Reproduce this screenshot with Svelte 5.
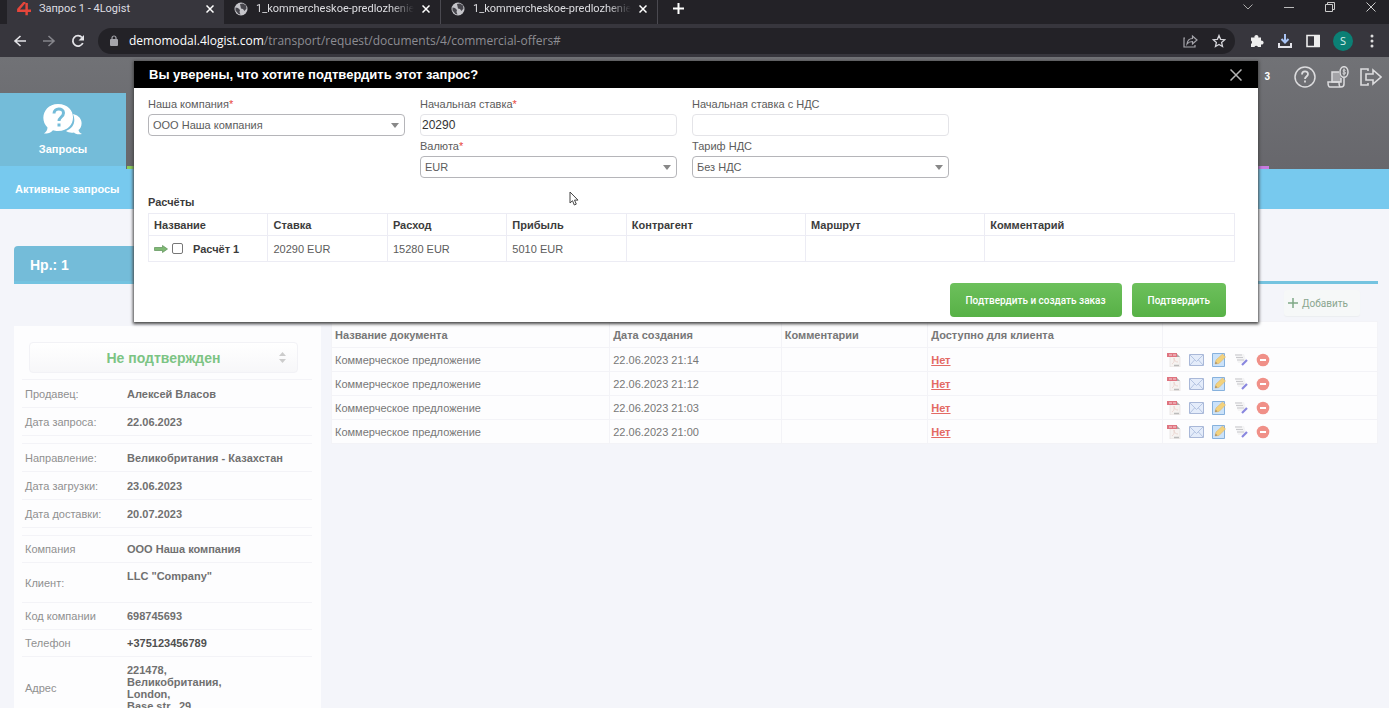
<script>
    const browserTabs = [
        { title: "Запрос 1 - 4Logist", active: true },
        { title: "1_kommercheskoe-predlozhenie", active: false },
        { title: "1_kommercheskoe-predlozhenie", active: false }
    ];

    const sections = [
        "#77c9ee", "#8bd05a", "#e8b84f", "#e0715c", "#6fa8dc",
        "#5cc0a8", "#d9a05b", "#7f8fd9", "#a9c45a", "#c77be0"
    ];

    const documents = [
        { name: "Коммерческое предложение", created: "22.06.2023 21:14" },
        { name: "Коммерческое предложение", created: "22.06.2023 21:12" },
        { name: "Коммерческое предложение", created: "22.06.2023 21:03" },
        { name: "Коммерческое предложение", created: "22.06.2023 21:00" }
    ];

    const details = [
        [
            { label: "Продавец:", value: "Алексей Власов" },
            { label: "Дата запроса:", value: "22.06.2023" }
        ],
        [
            { label: "Направление:", value: "Великобритания - Казахстан" },
            { label: "Дата загрузки:", value: "23.06.2023" },
            { label: "Дата доставки:", value: "20.07.2023" }
        ],
        [
            { label: "Компания", value: "ООО Наша компания" },
            { label: "Клиент:", value: 'LLC "Company"', tall: true },
            { label: "Код компании", value: "698745693" },
            { label: "Телефон", value: "+375123456789", dark: true },
            { label: "Адрес", value: "221478,\nВеликобритания,\nLondon,\nBase str., 29" }
        ]
    ];

    const calculations = [
        { name: "Расчёт 1", rate: "20290 EUR", cost: "15280 EUR", profit: "5010 EUR" }
    ];

    let modalOpen = true;
    let rate = "20290";
    let rateVat = "";
    let url = "/transport/request/documents/4/commercial-offers#";
</script>

<div class="window">
    <div class="tabstrip">
        {#each browserTabs as tab}
            <div class="tab" class:active={tab.active}>
                {#if tab.active}
                    <svg class="favicon" viewBox="0 0 16 16">
                        <path d="M9 0 1.500 8.500V10H9M11 1v14M8 10h8" fill="none" stroke="#e5463b" stroke-width="2.800" />
                    </svg>
                {:else}
                    <svg class="favicon" viewBox="0 0 14 14">
                        <circle cx="7" cy="7" r="6.500" fill="#c5c5ca" />
                        <path d="M1.500 5.500 4 6l2 2-.5 2 1 2.500-2-.5-3-3.500zM6 2l3-.5 3 2 .5 3-2 2.500-1.500-2-2-.5z" fill="#47464d" />
                    </svg>
                {/if}
                <span class="tab-title">{tab.title}</span>
                <button class="plain" aria-label="Закрыть вкладку">
                    <svg width="8" height="8" viewBox="0 0 8 8"><path d="m.5.5 7 7m0-7-7 7" stroke="#fff" stroke-width="1.500" /></svg>
                </button>
            </div>
        {/each}
        <button class="plain new-tab" aria-label="Новая вкладка">
            <svg width="11" height="11" viewBox="0 0 11 11"><path d="M5.500 0v11M0 5.500h11" stroke="#fff" stroke-width="2" /></svg>
        </button>
        <div class="window-buttons">
            <button class="plain" aria-label="Поиск вкладок">
                <svg width="12" height="12" viewBox="0 0 12 12"><path d="m1.500 3.500 4.500 4.500 4.500-4.500" fill="none" stroke="#aaa" /></svg>
            </button>
            <button class="plain" aria-label="Свернуть">
                <svg width="12" height="12" viewBox="0 0 12 12"><path d="M1 6.500h10" stroke="#bbb" /></svg>
            </button>
            <button class="plain" aria-label="Развернуть">
                <svg width="12" height="12" viewBox="0 0 12 12"><path d="M1.500 3.500h7v7h-7zM3.500 3V1.500h7v7H9" fill="none" stroke="#ccc" /></svg>
            </button>
            <button class="plain" aria-label="Закрыть">
                <svg width="12" height="12" viewBox="0 0 12 12"><path d="m1.500 1.500 9 9m0-9-9 9" stroke="#ccc" /></svg>
            </button>
        </div>
    </div>

    <div class="toolbar">
        <button class="plain" aria-label="Назад">
            <svg width="14" height="14" viewBox="0 0 14 14"><path d="M13 7H2m5.500-5L2 7l5.500 5" fill="none" stroke="#e4e4e8" stroke-width="1.600" /></svg>
        </button>
        <button class="plain" aria-label="Вперёд">
            <svg width="14" height="14" viewBox="0 0 14 14"><path d="M1 7h11M6.500 2 12 7l-5.500 5" fill="none" stroke="#85858b" stroke-width="1.600" /></svg>
        </button>
        <button class="plain" aria-label="Обновить">
            <svg width="14" height="14" viewBox="0 0 14 14">
                <path d="M11.800 9A5.200 5.200 0 1 1 11 3.500" fill="none" stroke="#e4e4e8" stroke-width="1.800" />
                <path d="M13 1v5.500H7.500z" fill="#e4e4e8" />
            </svg>
        </button>
        <div class="address">
            <svg width="8" height="11" viewBox="0 0 8 11">
                <path d="M2 5V3a2 2 0 0 1 4 0v2" fill="none" stroke="#a5a5ab" stroke-width="1.200" />
                <rect y="4" width="8" height="7" rx="1" fill="#a5a5ab" />
            </svg>
            <span class="url"><b>demomodal.4logist.com</b>{url}</span>
            <button class="plain" aria-label="Поделиться">
                <svg width="15" height="14" viewBox="0 0 15 14">
                    <path d="M2 4H1v9h11v-2M4 10c.5-4 2.500-5.500 5.500-5.500V2L14 6l-4.500 4V7.500C7 7.500 5.500 8 4 10z" fill="none" stroke="#a5a5ab" stroke-width="1.200" />
                </svg>
            </button>
            <button class="plain" aria-label="Добавить в закладки">
                <svg width="14" height="14" viewBox="0 0 14 14">
                    <path d="m7 1.500 1.600 3.800 4.100.4-3.100 2.700.9 4.100L7 10.400l-3.500 2.100.9-4.100-3.100-2.700 4.100-.4z" fill="none" stroke="#d5d5da" stroke-width="1.300" />
                </svg>
            </button>
        </div>
        <div class="tools">
            <button class="plain" aria-label="Расширения">
                <svg width="14" height="14" viewBox="0 0 14 14">
                    <path d="M1 3.500h3.500a2 2 0 1 1 3.800 0H11v3.200a2 2 0 1 1 0 3.800V13H8a2 2 0 0 0-3.600 0H1v-3a2 2 0 0 0 0-3.500z" fill="#eee" />
                </svg>
            </button>
            <button class="plain" aria-label="Загрузки">
                <svg width="16" height="16" viewBox="0 0 16 16">
                    <path d="M8 1v8M4.500 6 8 9.500 11.500 6" fill="none" stroke="#a9c4f5" stroke-width="2" />
                    <path d="M2 10v4h12v-4" fill="none" stroke="#e4e4ea" stroke-width="2" />
                </svg>
            </button>
            <button class="plain" aria-label="Боковая панель">
                <svg width="14" height="14" viewBox="0 0 14 14">
                    <path d="M1 1.500h12v11H1z" fill="none" stroke="#eee" stroke-width="1.600" />
                    <path d="M8 1h6v12H8z" fill="#eee" />
                </svg>
            </button>
            <button class="plain avatar">S</button>
            <button class="plain menu" aria-label="Меню">
                <svg width="4" height="14" viewBox="0 0 4 14" fill="#ddd">
                    <circle cx="2" cy="2" r="1.500" /><circle cx="2" cy="7" r="1.500" /><circle cx="2" cy="12" r="1.500" />
                </svg>
            </button>
        </div>
    </div>

    <div class="page">
        <header>
            <div class="user-bar">
                <span class="count">3</span>
                <button class="plain" aria-label="Помощь">
                    <svg width="22" height="22" viewBox="0 0 22 22" fill="none" stroke="#dcdcde" stroke-width="1.500">
                        <circle cx="11" cy="11" r="10" />
                        <path d="M8 8.500c0-4 6-4 6-.5 0 2.500-3 2.500-3 5M11 14.500v2" stroke-width="1.800" />
                    </svg>
                </button>
                <button class="plain" aria-label="Счета">
                    <svg width="22" height="22" viewBox="0 0 22 22" fill="none" stroke="#dcdcde" stroke-width="1.500">
                        <path d="M12 6H5v10h9V12" fill="#a3a3a7" />
                        <path d="M17 12v6a3 3 0 0 1-3 3H3c-2 0-2-5-2-5h11c0 2 .5 5 2 5" />
                        <ellipse cx="17" cy="6" rx="4" ry="5.300" fill="#6d6e72" />
                        <path d="M18.500 4.500c-1-1-3-.5-2.500.7s3 .8 2.500 2-2 1-3 0M17 2.500v7" stroke-width="1" />
                    </svg>
                </button>
                <button class="plain" aria-label="Выход">
                    <svg width="22" height="20" viewBox="0 0 22 20" fill="none" stroke="#dcdcde" stroke-width="1.600">
                        <path d="M8 4V2H1v16h7v-2M6 7h7V3l8 7-8 7v-4H6z" />
                    </svg>
                </button>
            </div>
            <nav class="sections">
                {#each sections as color, i}
                    <a href="#section{i}" class="section" class:current={i === 0} style:border-bottom-color={color} aria-label={i === 0 ? "Запросы" : `Раздел ${i + 1}`}>
                        {#if i === 0}
                            <svg width="40" height="32" viewBox="0 0 40 32">
                                <path d="M30 10c12 3 9 14 5.500 16 .5 2 1.500 3 3.500 4-4 .8-7-.2-8-1.500-3 .5-6 0-8-1.500 8-3 10-10 7-17z" fill="#fff" />
                                <path d="M15 0c20 0 20 27 0 27-2 0-4-.3-5-.8C7.500 29 5 29.500 1 29.500c2-1.500 3.500-3.500 3.500-6C-4 15.500 1 0 15 0z" fill="#fff" />
                                <path d="M11 9.500c0-6 9.500-6 9.500-.5 0 4-4.500 4-4.500 8M16 19.500v3" fill="none" stroke="#74bcd9" stroke-width="3" />
                            </svg>
                            <span>Запросы</span>
                        {/if}
                    </a>
                {/each}
            </nav>
        </header>
        <nav class="subnav">
            <a href="#active">Активные запросы</a>
        </nav>

        <main>
            <h1><span>Нр.: 1</span></h1>
            <div class="actions">
                <button class="add">
                    <svg width="10" height="10" viewBox="0 0 10 10"><path d="M5 0v10M0 5h10" stroke="#7fa886" stroke-width="1.500" /></svg>
                    Добавить
                </button>
            </div>
            <div class="columns">
                <aside>
                    <button class="status">
                        <span>Не подтвержден</span>
                        <svg width="7" height="11" viewBox="0 0 7 11" fill="#ccc"><path d="M0 4h7L3.500 0zM0 7h7l-3.500 4z" /></svg>
                    </button>
                    {#each details as group}
                        <table class="details">
                            <tbody>
                                {#each group as row}
                                    <tr class:tall={row.tall}>
                                        <th scope="row">{row.label}</th>
                                        <td class:dark={row.dark}>{row.value}</td>
                                    </tr>
                                {/each}
                            </tbody>
                        </table>
                    {/each}
                </aside>

                <table class="documents">
                    <colgroup>
                        <col style:width="26.6%">
                        <col style:width="16.4%">
                        <col style:width="14%">
                        <col style:width="22.4%">
                        <col>
                    </colgroup>
                    <thead>
                        <tr>
                            <th>Название документа</th>
                            <th>Дата создания</th>
                            <th>Комментарии</th>
                            <th>Доступно для клиента</th>
                            <th></th>
                        </tr>
                    </thead>
                    <tbody>
                        {#each documents as doc}
                            <tr>
                                <td>{doc.name}</td>
                                <td>{doc.created}</td>
                                <td></td>
                                <td><a href="#access">Нет</a></td>
                                <td>
                                    <div class="icons">
                                        <button class="plain" aria-label="PDF">
                                            <svg width="14" height="14" viewBox="0 0 14 14">
                                                <path d="M3 1h7l3 3v10H3z" fill="#f6f3f1" stroke="#e2dedc" stroke-width=".6" />
                                                <path d="M10 1v3h3z" fill="#aaa" />
                                                <path d="M0 0h10v4H0z" fill="#df7480" />
                                                <path d="M2 2h3M6 2h3" stroke="#f7d5d8" />
                                                <path d="M5 11c3-2 2-4 2-6 0 3 2 4 4 4" fill="none" stroke="#e9cfc9" stroke-width=".8" />
                                                <path d="M7 12.500h5" stroke="#bbb" stroke-width="1.500" />
                                            </svg>
                                        </button>
                                        <button class="plain" aria-label="Отправить">
                                            <svg width="15" height="12" viewBox="0 0 15 12">
                                                <path d="M.5.5h14v11H.5z" fill="#e4ecfa" stroke="#a9b8d8" />
                                                <path d="m1 11 4.500-5M14 11 9.500 6M1 1l6.500 6.500L14 1" fill="none" stroke="#b4c4e2" />
                                            </svg>
                                        </button>
                                        <button class="plain" aria-label="Изменить">
                                            <svg width="14" height="14" viewBox="0 0 14 14">
                                                <path d="M.5.5h12v13H.5z" fill="#cbe2f9" stroke="#86b1dd" />
                                                <path d="m3 11 1-4L10.500 1 13.500 4 7 10.500z" fill="#f3d27c" stroke="#d9b36a" stroke-width=".5" />
                                                <path d="m3 11 .7-2.500L5.500 10.500z" fill="#a58d6b" />
                                            </svg>
                                        </button>
                                        <button class="plain" aria-label="Подписать">
                                            <svg width="14" height="14" viewBox="0 0 14 14">
                                                <path d="M1 1h9l2 6-4 3H4z" fill="#f4f4f5" />
                                                <path d="M1 2h7M2 4.500h7M3 7h7" stroke="#c9c9cd" />
                                                <path d="m8 12 5-5" stroke="#8886df" stroke-width="2.200" />
                                            </svg>
                                        </button>
                                        <button class="plain" aria-label="Удалить">
                                            <svg width="14" height="14" viewBox="0 0 14 14">
                                                <circle cx="7" cy="7" r="6.300" fill="#f09088" />
                                                <path d="M4 7h6" stroke="#fff" stroke-width="2" />
                                            </svg>
                                        </button>
                                    </div>
                                </td>
                            </tr>
                        {/each}
                    </tbody>
                </table>
            </div>
        </main>
    </div>

    {#if modalOpen}
        <div class="modal" role="dialog" aria-labelledby="modal-title">
            <div class="modal-header">
                <h2 id="modal-title">Вы уверены, что хотите подтвердить этот запрос?</h2>
                <button class="plain" aria-label="Закрыть окно" on:click={() => (modalOpen = false)}>
                    <svg width="12" height="12" viewBox="0 0 12 12"><path d="m.5.5 11 11m0-11-11 11" stroke="#b5b5b5" stroke-width="1.500" /></svg>
                </button>
            </div>
            <div class="modal-body">
                <div class="fields">
                    <div class="field">
                        <label for="company">Наша компания<i>*</i></label>
                        <div class="select"><select id="company"><option>ООО Наша компания</option></select></div>
                    </div>
                    <div class="field">
                        <label for="rate">Начальная ставка<i>*</i></label>
                        <input id="rate" type="text" bind:value={rate}>
                    </div>
                    <div class="field">
                        <label for="rate-vat">Начальная ставка с НДС</label>
                        <input id="rate-vat" type="text" bind:value={rateVat}>
                    </div>
                    <div class="field second">
                        <label for="currency">Валюта<i>*</i></label>
                        <div class="select"><select id="currency"><option>EUR</option></select></div>
                    </div>
                    <div class="field">
                        <label for="vat">Тариф НДС</label>
                        <div class="select"><select id="vat"><option>Без НДС</option></select></div>
                    </div>
                </div>

                <h3>Расчёты</h3>
                <table class="calculations">
                    <colgroup>
                        <col style:width="11%">
                        <col style:width="11%">
                        <col style:width="11%">
                        <col style:width="11%">
                        <col style:width="16.5%">
                        <col style:width="16.5%">
                        <col>
                    </colgroup>
                    <thead>
                        <tr>
                            <th>Название</th>
                            <th>Ставка</th>
                            <th>Расход</th>
                            <th>Прибыль</th>
                            <th>Контрагент</th>
                            <th>Маршрут</th>
                            <th>Комментарий</th>
                        </tr>
                    </thead>
                    <tbody>
                        {#each calculations as calc, i}
                            <tr>
                                <td>
                                    <div class="calc-name">
                                        <svg width="14" height="8" viewBox="0 0 14 8">
                                            <path d="M.5 2.500h8v-2L13.500 4l-5 3.500v-2h-8z" fill="#7fb974" stroke="#5c8f58" stroke-width=".7" />
                                        </svg>
                                        <input type="checkbox" id="calc{i}">
                                        <label for="calc{i}">{calc.name}</label>
                                    </div>
                                </td>
                                <td>{calc.rate}</td>
                                <td>{calc.cost}</td>
                                <td>{calc.profit}</td>
                                <td></td>
                                <td></td>
                                <td></td>
                            </tr>
                        {/each}
                    </tbody>
                </table>

                <div class="modal-buttons">
                    <button>Подтвердить и создать заказ</button>
                    <button>Подтвердить</button>
                </div>
            </div>
        </div>
    {/if}

    <svg class="cursor" width="10" height="15" viewBox="0 0 10 15">
        <path d="M1 1v11l2.500-2.300L5.300 14l2-.9-1.800-4H9z" fill="#fff" stroke="#444" />
    </svg>
</div>

<style>
    :global(body) {
        margin: 0;
    }

    .window {
        position: relative;
        height: 100vh;
        overflow: hidden;
        display: flex;
        flex-direction: column;
        background-color: #f4f5fa;
        font-family: "Liberation Sans", Arial, sans-serif;
        font-size: 11px;
        color: #777;
    }

    .window * {
        box-sizing: border-box;
    }

    svg {
        display: block;
        flex: none;
    }

    button, input, select {
        font: inherit;
        color: inherit;
    }

    .plain {
        flex: none;
        display: flex;
        align-items: center;
        justify-content: center;
        padding: 0;
        border: 0;
        background: none;
    }

    /* browser */
    .tabstrip {
        display: flex;
        height: 24px;
        padding-left: 7px;
        background-color: #232227;
        font-family: Roboto, "Noto Sans", sans-serif;
        color: #dedee2;
    }

    .tab {
        display: flex;
        align-items: center;
        width: 217px;
        padding: 0 10px 7px 10px;
        border-right: 1px solid #4a4950;
    }

    .tab.active {
        background-color: #37363d;
        border-right: 0;
    }

    .favicon {
        width: 14px;
        height: 14px;
        margin-right: 8px;
    }

    .tab-title {
        flex: 1;
        margin-right: 8px;
        white-space: nowrap;
        mask-image: linear-gradient(to right, #000 85%, transparent);
    }

    .tab.active .tab-title {
        mask-image: none;
    }

    .new-tab {
        width: 40px;
        padding-bottom: 7px;
    }

    .window-buttons {
        display: flex;
        gap: 29px;
        margin-left: auto;
        padding: 0 12px 10px 0;
    }

    .toolbar {
        display: flex;
        align-items: center;
        gap: 15px;
        height: 33px;
        padding: 0 15px 0 13px;
        background-color: #37363d;
        font-family: "Open Sans", "Noto Sans", sans-serif;
    }

    .address {
        flex: 1;
        display: flex;
        align-items: center;
        gap: 14px;
        height: 26px;
        margin-left: -2px;
        padding: 0 9px 0 12px;
        border-radius: 13px;
        background-color: #232227;
    }

    .url {
        flex: 1;
        margin-left: -3px;
        font-size: 12px;
        color: #8d8d93;
    }

    .url b {
        font-weight: 400;
        color: #fff;
    }

    .tools {
        display: flex;
        align-items: center;
        gap: 13px;
    }

    .avatar {
        width: 20px;
        height: 20px;
        border-radius: 50%;
        background-color: #0b8075;
        color: #d8f0ec;
    }

    .menu {
        margin-left: 4px;
    }

    /* page */
    .page {
        flex: 1;
        min-height: 0;
    }

    header {
        background: linear-gradient(#717276, #67676c);
    }

    .user-bar {
        display: flex;
        align-items: center;
        justify-content: flex-end;
        gap: 11px;
        height: 36px;
        padding: 3px 7px 0 0;
    }

    .count {
        margin-right: 13px;
        font-size: 10px;
        font-weight: bold;
        color: #fff;
    }

    .sections {
        display: flex;
        gap: 1px;
    }

    .section {
        display: flex;
        flex-direction: column;
        align-items: center;
        gap: 7px;
        width: 126px;
        height: 76px;
        padding-top: 11px;
        border-bottom: 3px solid;
        color: #fff;
        font-weight: bold;
        text-decoration: none;
    }

    .section.current {
        background-color: #74bcd9;
    }

    .subnav {
        display: flex;
        align-items: center;
        height: 40px;
        padding-left: 15px;
        background-color: #77c9ee;
    }

    .subnav a {
        color: #fff;
        font-weight: bold;
        text-decoration: none;
    }

    main {
        padding: 37px 11px 0 14px;
    }

    h1 {
        display: flex;
        margin: 0;
        border-bottom: 3px solid #74c3e0;
        font-size: 14px;
        color: #fff;
    }

    h1 span {
        width: 300px;
        padding: 11px 16px 8px;
        border-radius: 4px 4px 0 0;
        background-color: #74bcd9;
        line-height: 16px;
    }

    .actions {
        display: flex;
        justify-content: flex-end;
        padding: 6px 18px 5px;
    }

    .add {
        display: flex;
        align-items: center;
        gap: 4px;
        height: 26px;
        padding: 0 12px 0 4px;
        border: 0;
        border-radius: 3px;
        background-color: #f6f8f8;
        box-shadow: 0 1px 1px #eceef0;
        font-family: Roboto, sans-serif;
        font-size: 10px;
        color: #8aa68f;
    }

    .columns {
        display: flex;
        align-items: flex-start;
        gap: 10px;
    }

    aside {
        width: 307px;
        margin-top: 5px;
        padding: 16px 9px 0 8px;
        background-color: #fdfdfe;
    }

    .status {
        display: flex;
        align-items: center;
        width: calc(100% - 21px);
        height: 31px;
        margin: 0 14px 6px 7px;
        padding: 0 11px 0 18px;
        border: 1px solid #f2f2f6;
        border-radius: 4px;
        background: linear-gradient(#fff, #f7f7f9);
        font-size: 14px;
        font-weight: bold;
        color: #7cc484;
    }

    .status span {
        flex: 1;
    }

    table {
        border-collapse: collapse;
        text-align: left;
    }

    th, td {
        padding: 0 4px;
        border: 1px solid #f3f3f7;
        line-height: 12px;
    }

    .details {
        width: 100%;
        margin-bottom: 7px;
        table-layout: fixed;
    }

    .details tr {
        height: 28px;
    }

    .details:last-child tr {
        height: 27px;
    }

    .details:last-child .tall {
        height: 40px;
    }

    .details th, .details td {
        border-width: 1px 0;
    }

    .details th {
        width: 102px;
        padding-left: 3px;
        font-weight: 400;
        color: #909090;
    }

    .details td {
        padding: 7px 3px;
        font-weight: bold;
        color: #707070;
        white-space: pre-line;
    }

    .details .tall td {
        vertical-align: top;
    }

    .details .dark {
        color: #505050;
    }

    .documents {
        flex: 1;
        table-layout: fixed;
        background-color: #fdfdfe;
    }

    .documents tr {
        height: 24px;
    }

    .documents thead tr {
        height: 26px;
    }

    .documents th, .documents td {
        padding-left: 3px;
    }

    .documents td a {
        font-weight: bold;
        color: #e36a64;
    }

    .icons {
        display: flex;
        align-items: center;
        gap: 8px;
        padding-left: 1px;
    }

    /* modal */
    .modal {
        position: absolute;
        top: 61px;
        left: 134px;
        right: 131px;
        background-color: #fff;
        box-shadow: 0 1px 3px 1px #444;
        color: #5c5c5c;
    }

    .modal-header {
        display: flex;
        align-items: center;
        justify-content: space-between;
        height: 27px;
        padding: 0 16px 0 15px;
        background-color: #000;
    }

    h2 {
        margin: 0;
        font-size: 13px;
        color: #fff;
    }

    .modal-body {
        padding: 10px 23px 5px 14px;
    }

    .fields {
        display: grid;
        grid-template-columns: repeat(4, 1fr);
        gap: 4px 15px;
        padding-right: 14px;
    }

    .field:nth-child(3) {
        grid-column: 3 / 5;
        width: calc(50% - 8px);
    }

    .second {
        grid-column: 2;
    }

    .field label {
        display: block;
        height: 16px;
        line-height: 13px;
    }

    i {
        font-style: normal;
        color: #e8453c;
    }

    .field input, select {
        display: block;
        width: 100%;
        height: 22px;
        padding: 0 4px;
        border: 1px solid #b5b5b9;
        border-radius: 4px;
        background-color: #fff;
    }

    .field input {
        padding: 0 1px;
        border-color: #e4e4e8;
        font-size: 12px;
        color: #333;
    }

    select {
        appearance: none;
    }

    .select {
        position: relative;
    }

    .select::after {
        content: "";
        position: absolute;
        top: 9px;
        right: 6px;
        border: 4px solid transparent;
        border-top: 5px solid #888;
        border-bottom: 0;
    }

    h3 {
        margin: 18px 0 4px;
        font-size: 11px;
        line-height: 13px;
        color: #3c3c3c;
    }

    .calculations {
        width: 100%;
        table-layout: fixed;
    }

    .calculations th, .calculations td {
        height: 22px;
        padding-left: 5px;
        border-color: #ececf4;
    }

    .calculations td {
        height: 26px;
    }

    .calculations th, .calc-name {
        font-weight: bold;
        color: #3c3c3c;
    }

    .calc-name {
        display: flex;
        align-items: center;
    }

    .calc-name input {
        appearance: none;
        width: 11px;
        height: 11px;
        margin: 0 10px 0 4px;
        border: 1px solid #777;
        border-radius: 2px;
    }

    .modal-buttons {
        display: flex;
        justify-content: flex-end;
        gap: 10px;
        margin: 21px 9px 0 0;
    }

    .modal-buttons button {
        height: 34px;
        padding: 0 16px;
        border: 0;
        border-radius: 4px;
        background: linear-gradient(#6dc05c, #57b146);
        font-family: Roboto, sans-serif;
        font-size: 10px;
        font-weight: 500;
        color: #fff;
    }

    .cursor {
        position: absolute;
        top: 191px;
        left: 569px;
    }
</style>
